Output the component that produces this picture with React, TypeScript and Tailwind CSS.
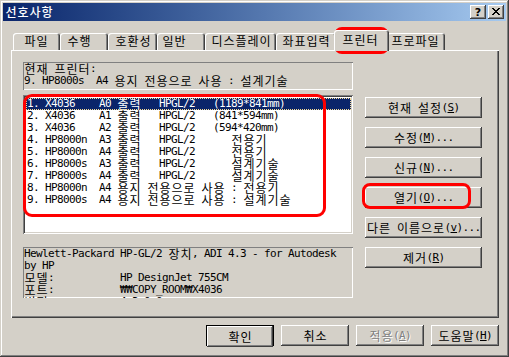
import React from "react";

const WIDE = /[\u1100-\u11FF\u3130-\u318F\uAC00-\uD7AF]/;

function G({ s }: { s: string }) {
  const out: React.ReactNode[] = [];
  let u = false;
  let k = 0;
  for (const ch of s) {
    if (ch === "&") {
      u = true;
      continue;
    }
    const wide = WIDE.test(ch);
    out.push(
      <span
        key={k++}
        className={
          (wide
            ? "w-[12px] h-[12px] text-[12px] leading-[11px] font-['Noto_Sans_CJK_KR',sans-serif]"
            : "w-[6px] h-[12px] text-[11px] leading-[12px] font-['DejaVu_Sans_Mono',monospace]") +
          " inline-block align-top text-center whitespace-pre" +
          (u ? " underline underline-offset-[1px]" : "")
        }
      >
        {ch}
      </span>
    );
    u = false;
  }
  return <>{out}</>;
}

function Line({ s, className = "" }: { s: string; className?: string }) {
  return (
    <div
      className={
        "h-[12px] leading-[12px] whitespace-nowrap font-['DejaVu_Sans_Mono',monospace] text-[11px] " +
        className
      }
    >
      <G s={s} />
    </div>
  );
}

const raised =
  "shadow-[inset_-1px_-1px_#404040,inset_1px_1px_#ffffff,inset_-2px_-2px_#808080,inset_2px_2px_#d4d0c8]";
const sunken1 = "shadow-[inset_1px_1px_#808080,inset_-1px_-1px_#ffffff]";
const sunken2 =
  "shadow-[inset_1px_1px_#808080,inset_-1px_-1px_#ffffff,inset_2px_2px_#404040,inset_-2px_-2px_#d4d0c8]";

function Btn({
  s,
  className = "",
  disabled = false,
}: {
  s: string;
  className?: string;
  disabled?: boolean;
}) {
  return (
    <div
      className={`flex h-[21px] items-center justify-center bg-[#d4d0c8] ${raised} ${className}`}
    >
      <div
        className={
          "h-[12px] leading-[12px] whitespace-nowrap font-['DejaVu_Sans_Mono',monospace] text-[11px] " +
          (disabled ? "text-[#808080] [text-shadow:1px_1px_#ffffff]" : "text-black")
        }
      >
        <G s={s} />
      </div>
    </div>
  );
}

const tabs = [
  { l: "파일", w: "w-[47px]", pl: "pl-[11px]" },
  { l: "수행", w: "w-[48px]", pl: "pl-[7px]" },
  { l: "호환성", w: "w-[49px]", pl: "pl-[7px]" },
  { l: "일반", w: "w-[48px]", pl: "pl-[5px]" },
  { l: "디스플레이", w: "w-[71px]", pl: "pl-[6px]" },
  { l: "좌표입력", w: "w-[60px]", pl: "pl-[6px]" },
  { l: "프린터", w: "w-[55px]", pl: "pl-[8px]", sel: true },
  { l: "프로파일", w: "w-[58px]", pl: "pl-[4px]" },
];

const rows = [
  "1. X4036    A0 출력   HPGL/2   (1189*841mm)",
  "2. X4036    A1 출력   HPGL/2   (841*594mm)",
  "3. X4036    A2 출력   HPGL/2   (594*420mm)",
  "4. HP8000n  A3 출력   HPGL/2      전용기",
  "5. HP8000n  A4 출력   HPGL/2      전용기",
  "6. HP8000s  A3 출력   HPGL/2      설계기술",
  "7. HP8000s  A4 출력   HPGL/2      설계기술",
  "8. HP8000n  A4 용지 전용으로 사용 : 전용기",
  "9. HP8000s  A4 용지 전용으로 사용 : 설계기술",
];

const desc = [
  "Hewlett-Packard HP-GL/2 장치, ADI 4.3 - for Autodesk",
  "by HP",
  "모델:           HP DesignJet 755CM",
  "포트:           ₩₩COPY_ROOM₩X4036",
  "버전:           4.3.0.0",
];

function CloseGlyph() {
  const px = [
    [0, 0], [1, 0], [6, 0], [7, 0],
    [1, 1], [2, 1], [5, 1], [6, 1],
    [2, 2], [3, 2], [4, 2], [5, 2],
    [3, 3], [4, 3],
    [2, 4], [3, 4], [4, 4], [5, 4],
    [1, 5], [2, 5], [5, 5], [6, 5],
    [0, 6], [1, 6], [6, 6], [7, 6],
  ];
  return (
    <svg width="8" height="7" viewBox="0 0 8 7" shapeRendering="crispEdges">
      {px.map(([x, y], i) => (
        <rect key={i} x={x} y={y} width="1" height="1" fill="#000" />
      ))}
    </svg>
  );
}

export default function App() {
  return (
    <div className="relative h-[357px] w-[509px] overflow-hidden bg-[#d4d0c8] p-[3px] text-black shadow-[inset_-1px_-1px_#404040,inset_1px_1px_#d4d0c8,inset_-2px_-2px_#808080,inset_2px_2px_#ffffff]">
      {/* Title bar */}
      <div className="flex h-[18px] items-center bg-linear-to-r from-[#0a246a] to-[#a6caf0] pl-[2px] pr-[2px]">
        <div className="h-[12px] whitespace-nowrap leading-[12px] font-medium text-white">
          <G s="선호사항" />
        </div>
        <div className="ml-auto flex gap-[2px]">
          <div
            className={`flex h-[14px] w-[16px] items-center justify-center bg-[#d4d0c8] ${raised}`}
          >
            <span className="font-['DejaVu_Sans',sans-serif] text-[11px] font-bold leading-none">
              ?
            </span>
          </div>
          <div
            className={`flex h-[14px] w-[16px] items-center justify-center bg-[#d4d0c8] pb-[1px] ${raised}`}
          >
            <CloseGlyph />
          </div>
        </div>
      </div>

      <div className="pl-[8px] pr-[7px]">
        {/* Tabs */}
        <div className="flex h-[29px] items-end pl-[2px]">
          {tabs.map((t) =>
            t.sel ? (
              <div
                key={t.l}
                className={`relative z-10 -mx-[2px] -mb-[1px] h-[21px] ${t.w} ${t.pl} rounded-t-[3px] bg-[#d4d0c8] pt-[4px] shadow-[inset_1px_1px_#ffffff,inset_-1px_0_#404040,inset_-2px_0_#808080]`}
              >
                <div className="h-[12px] whitespace-nowrap leading-[12px]">
                  <G s={t.l} />
                </div>
              </div>
            ) : (
              <div
                key={t.l}
                className={`h-[17px] ${t.w} ${t.pl} rounded-t-[3px] bg-[#d4d0c8] pt-[2px] shadow-[inset_1px_1px_#ffffff,inset_-1px_0_#404040,inset_-2px_0_#808080]`}
              >
                <div className="h-[12px] whitespace-nowrap leading-[12px]">
                  <G s={t.l} />
                </div>
              </div>
            )
          )}
        </div>

        {/* Panel */}
        <div className="flex h-[268px] pl-[12px] pt-[12px] shadow-[inset_1px_1px_#ffffff,inset_-1px_-1px_#404040,inset_-2px_-2px_#808080]">
          <div className="flex w-[330px] flex-col">
            <div className={`h-[28px] p-[1px] ${sunken1}`}>
              <Line s="현재 프린터:" />
              <Line s={rows[8]} />
            </div>
            <div className={`mt-[5px] h-[139px] bg-white p-[2px] ${sunken2}`}>
              <div className="pl-[1px] pt-[1px]">
                {rows.map((r, i) =>
                  i === 0 ? (
                    <div
                      key={i}
                      className="bg-[#0a246a] pl-[1px] text-white outline-1 -outline-offset-1 outline-dotted outline-[#f5db95]"
                    >
                      <Line s={r} />
                    </div>
                  ) : (
                    <div key={i} className="pl-[1px]">
                      <Line s={r} />
                    </div>
                  )
                )}
              </div>
            </div>
            <div className={`mt-[13px] h-[51px] overflow-hidden p-[1px] ${sunken1}`}>
              {desc.map((d, i) => (
                <Line key={i} s={d} />
              ))}
            </div>
          </div>
          <div className="ml-[12px] mt-[35px] flex w-[117px] flex-col gap-[9px]">
            <Btn s="현재 설정(&S)" />
            <Btn s="수정(&M)..." />
            <Btn s="신규(&N)..." />
            <Btn s="열기(&O)..." />
            <Btn s="다른 이름으로(&v)..." />
            <Btn s="제거(&R)" />
          </div>
        </div>

        {/* Bottom buttons */}
        <div className="mt-[7px] flex justify-end gap-[7px]">
          <div className="h-[21px] w-[68px] border border-black">
            <Btn s="확인" className="h-[19px]" />
          </div>
          <Btn s="취소" className="w-[68px]" />
          <Btn s="적용(&A)" className="w-[68px]" disabled />
          <Btn s="도움말(&H)" className="w-[68px]" />
        </div>
      </div>

      {/* Red annotation outlines */}
      <div className="pointer-events-none absolute left-[334px] top-[27px] h-[27px] w-[55px] rounded-[8px] border-[3px] border-[#ff0000]" />
      <div className="pointer-events-none absolute left-[23px] top-[94px] h-[123px] w-[303px] rounded-[9px] border-[3px] border-[#ff0000]" />
      <div className="pointer-events-none absolute left-[362px] top-[183px] h-[26px] w-[109px] rounded-[8px] border-[3px] border-[#ff0000]" />
    </div>
  );
}
